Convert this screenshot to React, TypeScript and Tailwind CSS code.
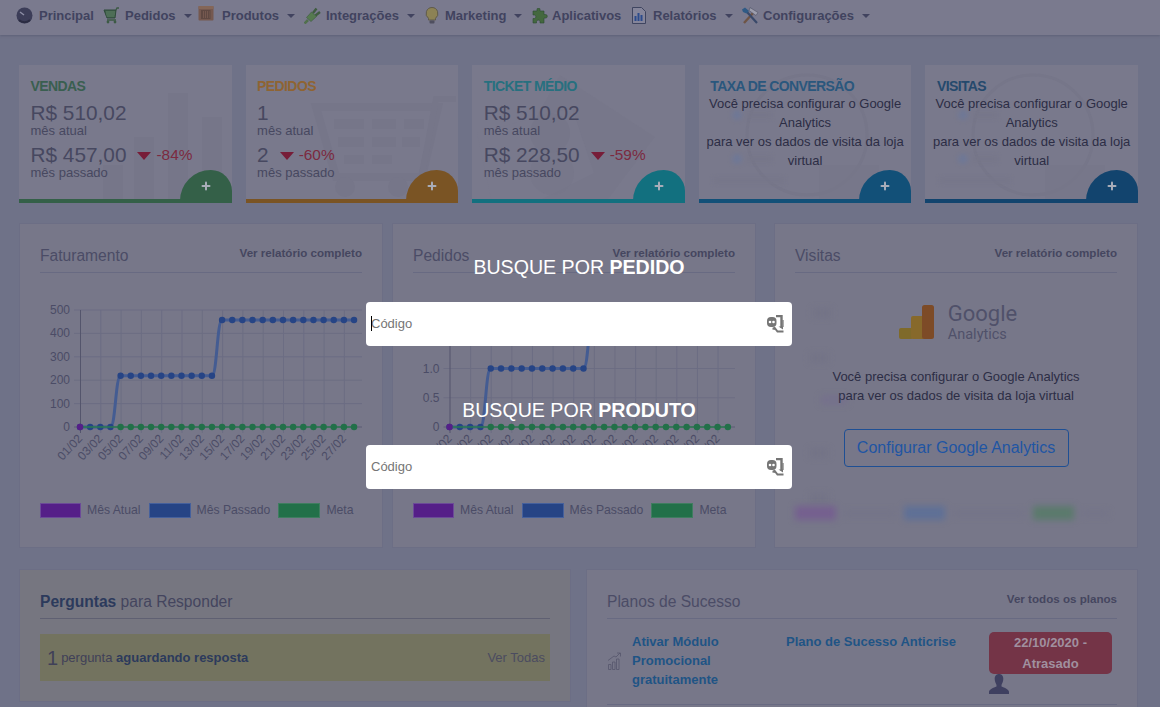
import type { ReactNode } from 'react';
import { Plus } from 'lucide-react';

const font = { fontFamily: '"Liberation Sans", Arial, sans-serif' };

function GlobeIcon() {
    return (
        <svg width="17" height="17" viewBox="0 0 17 17">
            <circle cx="8.500" cy="8.500" r="8" fill="#3c3d58" />
            <path d="M4 5l4 3" stroke="#8d8ea6" strokeWidth="1.400" />
            <path d="M3 13a8 8 0 0 0 11 0" stroke="#2b2c42" strokeWidth="2" fill="none" />
        </svg>
    );
}

function CartIcon() {
    return (
        <svg width="17" height="17" viewBox="0 0 17 17">
            <path d="M1 3h12l-1 8H4z" fill="#3f5f4a" stroke="#2e4a3a" />
            <path d="M3 5h9M3 7h9M3.500 9h8" stroke="#66856c" strokeWidth="0.800" />
            <path d="M13 3l1-2h2M4 13h9" stroke="#3c5a44" strokeWidth="1.300" fill="none" />
            <circle cx="5" cy="15" r="1.400" fill="#3c5a44" />
            <circle cx="12" cy="15" r="1.400" fill="#3c5a44" />
        </svg>
    );
}

function BoxIcon() {
    return (
        <svg width="16" height="16" viewBox="0 0 16 16">
            <rect x="0.500" y="1" width="15" height="14.500" rx="1" fill="#75584f" />
            <rect x="0.500" y="1" width="15" height="3" fill="#846658" />
            <path d="M4.500 6v7M6.500 6v7M8.500 6v7M10.500 6v7" stroke="#5f4842" strokeWidth="1" />
            <rect x="3.500" y="5.500" width="8.500" height="8" fill="none" stroke="#5f4842" />
        </svg>
    );
}

function PlugIcon() {
    return (
        <svg width="17" height="17" viewBox="0 0 17 17">
            <path d="M.5 16.500l3.500-3.500" stroke="#51704d" strokeWidth="2.600" />
            <path d="M2.500 10.500l5-5.500 5 4.500-5.500 5z" fill="#567a50" stroke="#3d5a3f" strokeWidth="0.600" />
            <path d="M9 6l3.500-4.500M11.500 8.500L16 5" stroke="#3f5c40" strokeWidth="2.400" />
        </svg>
    );
}

function BulbIcon() {
    return (
        <svg width="14" height="17" viewBox="0 0 14 17">
            <path d="M7 .5a6 6 0 0 1 3.500 10.800V13h-7v-1.700A6 6 0 0 1 7 .5z" fill="#8c8255" stroke="#5f5a4a" />
            <rect x="4.500" y="13.500" width="5" height="3" rx="1" fill="#4f4f5f" />
        </svg>
    );
}

function PuzzleIcon() {
    return (
        <svg width="17" height="16" viewBox="0 0 17 16">
            <path d="M1 3h4V1.500a1.500 1.500 0 0 1 3 0V3h4v3.500h1.500a1.800 1.800 0 0 1 0 3.600H12V15H8v-1.500a1.800 1.800 0 0 0-3.500 0V15H1v-4.500h1.500a1.800 1.800 0 0 0 0-3.500H1z" fill="#44683f" stroke="#2e4a33" strokeWidth="0.600" />
        </svg>
    );
}

function ReportIcon() {
    return (
        <svg width="14" height="17" viewBox="0 0 14 17">
            <path d="M.5.5h9l4 4v12H.5z" fill="#85859a" stroke="#3f4560" />
            <path d="M3.500 14V9M6.500 14V6M9.500 14V8" stroke="#2b4a8c" strokeWidth="2" />
        </svg>
    );
}

function ToolsIcon() {
    return (
        <svg width="17" height="17" viewBox="0 0 17 17">
            <path d="M2 16L12 5" stroke="#6f5546" strokeWidth="2.400" />
            <path d="M8 .5l8 5-2 3-7-5z" fill="#9c9dac" stroke="#4f5064" strokeWidth="0.600" />
            <path d="M15 16L5 5" stroke="#39496a" strokeWidth="2.200" />
            <path d="M0 2.500L3 .5l4 3.500-2.500 2.500L1 5z" fill="#2f5a85" />
        </svg>
    );
}

function FaceSwapIcon() {
    return (
        <svg width="17" height="18" viewBox="0 0 17 18" className="shrink-0">
            <rect x="0" y="2" width="9.500" height="10" rx="4" fill="#757575" />
            <circle cx="3" cy="7" r="1.300" fill="#fff" />
            <circle cx="6.500" cy="7" r="1.300" fill="#fff" />
            <path d="M9 1h5.500v11.500" fill="none" stroke="#757575" strokeWidth="2.400" />
            <path d="M16 5v7" stroke="#757575" strokeWidth="1.200" />
            <path d="M5.500 13.500l3 .5M7 12l3.500 4.500h6" fill="none" stroke="#757575" strokeWidth="2" />
            <path d="M11.500 11.500h4.500v3z" fill="#757575" />
        </svg>
    );
}

function NavItem({ icon, label, gap, caret, width }: { icon: ReactNode; label: string; gap: string; caret?: boolean; width: string }) {
    return (
        <div className={`flex items-center ${width}`}>
            <span className={`flex justify-center ${gap}`}>{icon}</span>
            <span className="text-[13px] font-bold text-[#41435f]">{label}</span>
            {caret && <span className="ml-[8px] border-x-[4px] border-t-[4px] border-x-transparent border-t-[#41435f]" />}
        </div>
    );
}

function Navigation() {
    return (
        <nav className="flex h-[35px] shrink-0 items-center bg-[#7a7a8e] pb-[4px] pl-[16px] shadow-[0_1px_2px_#5f6278]">
            <NavItem icon={<GlobeIcon />} label="Principal" gap="mr-[6px]" width="w-[87px]" />
            <NavItem icon={<CartIcon />} label="Pedidos" gap="mr-[5px]" caret width="w-[95px]" />
            <NavItem icon={<span className="-mt-[5px] block"><BoxIcon /></span>} label="Produtos" gap="mr-[8px]" caret width="w-[106px]" />
            <NavItem icon={<PlugIcon />} label="Integrações" gap="mr-[5px]" caret width="w-[121px]" />
            <NavItem icon={<BulbIcon />} label="Marketing" gap="mr-[6px]" caret width="w-[107px]" />
            <NavItem icon={<PuzzleIcon />} label="Aplicativos" gap="mr-[3px]" width="w-[100px]" />
            <NavItem icon={<ReportIcon />} label="Relatórios" gap="mr-[7px]" caret width="w-[110px]" />
            <NavItem icon={<ToolsIcon />} label="Configurações" gap="mr-[4px]" caret width="w-[135px]" />
        </nav>
    );
}

function Watermark({ kind }: { kind: string }) {
    const c = '#767689';
    if (kind === 'bars') {
        return (
            <svg className="absolute inset-0" width="213" height="138" viewBox="0 0 213 138">
                <path d="M84 135V100h20v35zM115 135V72h20v63zM149 135V28h20v107zM183 135V52h20v83z" fill={c} />
            </svg>
        );
    }
    if (kind === 'cart') {
        return (
            <svg className="absolute inset-0" width="213" height="138" viewBox="0 0 213 138">
                <path d="M70 42h122l-16 70H90z" fill="none" stroke={c} strokeWidth="8" />
                <path d="M88 54h30v10H88zM126 54h24v10h-24zM158 54h20v10h-20zM92 72h26v10H92zM126 72h24v10h-24zM156 72h18v10h-18zM98 90h20v9H98zM126 90h20v9h-20z" fill={c} />
                <path d="M176 110l14-76h20" fill="none" stroke={c} strokeWidth="6" />
                <circle cx="99" cy="122" r="10" fill={c} />
                <circle cx="152" cy="122" r="10" fill={c} />
            </svg>
        );
    }
    if (kind === 'ticket') {
        return (
            <svg className="absolute inset-0" width="213" height="138" viewBox="0 0 213 138">
                <path d="M88 10l95 62-50 66H60l-10-60z" fill={c} opacity="0.600" />
                <path d="M5 68l95-25 22 65-60 30H20z" fill="#79798c" />
                <circle cx="78" cy="68" r="20" fill={c} />
                <circle cx="80" cy="108" r="22" fill={c} opacity="0.700" />
            </svg>
        );
    }
    return (
        <svg className="absolute inset-0" width="213" height="138" viewBox="0 0 213 138">
            <circle cx="108" cy="70" r="60" fill="none" stroke={c} strokeWidth="3" />
            <rect x="120" y="100" width="60" height="38" fill={c} opacity="0.600" />
            <g className="blur-[2px]">
                <circle cx="38" cy="50" r="5" fill="#6f7896" />
                <rect x="48" y="47" width="24" height="6" fill={c} />
                <circle cx="38" cy="94" r="5" fill="#6f7896" />
                <rect x="48" y="91" width="24" height="6" fill={c} />
                <rect x="15" y="113" width="70" height="5" fill={c} />
            </g>
        </svg>
    );
}

function MetricCard({ title, titleClass, barClass, kind, rows, message }: {
    title: string;
    titleClass: string;
    barClass: string;
    kind: string;
    rows?: { now: string; before: string; delta: string };
    message?: boolean;
}) {
    return (
        <div className="relative h-[138px] overflow-hidden bg-[#79798c]">
            <Watermark kind={kind} />
            <div className="relative px-[11.500px] pt-[12px]">
                <h3 className={`text-sm leading-[18px] font-bold tracking-[-0.600px] ${titleClass}`}>{title}</h3>
                {rows && (
                    <div className="text-[#474860]">
                        <div className="mt-[6px] text-[20.800px] leading-[24px]">{rows.now}</div>
                        <div className="-mt-[2px] text-[13px] leading-[15px]">mês atual</div>
                        <div className="mt-[4px] flex items-center text-[20.800px] leading-[26px]">
                            <span>{rows.before}</span>
                            <span className="mt-[1px] ml-[11px] border-x-[7.500px] border-t-[8px] border-x-transparent border-t-[#771d38]" />
                            <span className="ml-[5px] text-[15.400px] text-[#7c2a40]">{rows.delta}</span>
                        </div>
                        <div className="-mt-[3px] text-[13px] leading-[15px]">mês passado</div>
                    </div>
                )}
                {message && (
                    <p className="-mx-[6px] -mt-[1px] text-center text-[13px] leading-[19px] text-[#2c2d45]">
                        Você precisa configurar o Google Analytics<br />para ver os dados de visita da loja virtual
                    </p>
                )}
            </div>
            <div className={`absolute inset-x-0 bottom-0 h-[4px] ${barClass}`} />
            <div className={`absolute right-0 bottom-0 flex h-[33px] w-[52px] items-center justify-center rounded-tl-[32px] rounded-tr-[22px] pb-[1px] ${barClass}`}>
                <Plus size={12} strokeWidth={4} className="text-[#a9adb9]" />
            </div>
        </div>
    );
}

const tickXs = [0, 2, 4, 6, 8, 10, 12, 14, 16, 18, 20, 22, 24, 26];

function LineChart({ x0, step, yTicks, yMax, values }: { x0: number; step: number; yTicks: { label: string; value: number }[]; yMax: number; values: number[] }) {
    const yOf = (v: number) => 137 - (117 * v) / yMax;
    const xOf = (i: number) => x0 + i * step;

    let line = `M${xOf(0)} ${yOf(values[0])}`;
    for (let i = 1; i < values.length; i++) {
        const mid = (xOf(i - 1) + xOf(i)) / 2;
        line += ` C${mid} ${yOf(values[i - 1])} ${mid} ${yOf(values[i])} ${xOf(i)} ${yOf(values[i])}`;
    }

    return (
        <svg width="322" height="190" viewBox="0 0 322 190" className="mt-[17px] overflow-visible" style={font}>
            {yTicks.map((t) => (
                <g key={t.label}>
                    <line x1={x0 - 6} x2="322" y1={yOf(t.value)} y2={yOf(t.value)} stroke={t.value === 0 ? '#5c5d74' : '#6c6d83'} />
                    <text x={x0 - 10} y={yOf(t.value) + 4} textAnchor="end" fontSize="12" fill="#4b4c66">{t.label}</text>
                </g>
            ))}
            {tickXs.map((i) => (
                <g key={i}>
                    <line x1={xOf(i) + 0.500} x2={xOf(i) + 0.500} y1="20" y2="143" stroke={i === 0 ? '#54556c' : '#6c6d83'} />
                    <text
                        x={xOf(i) + 3}
                        y="149"
                        fontSize="12"
                        fill="#4b4c66"
                        textAnchor="end"
                        transform={`rotate(-47 ${xOf(i) + 3} 149)`}
                    >
                        {`${String(i + 1).padStart(2, '0')}/02`}
                    </text>
                </g>
            ))}
            <path d={line} fill="none" stroke="#445c92" strokeWidth="3" />
            {values.map((v, i) => (
                <circle key={i} cx={xOf(i)} cy={yOf(v)} r="3.200" fill="#264485" />
            ))}
            <line x1={x0} x2={xOf(27)} y1="137" y2="137" stroke="#2a7a50" strokeWidth="1.500" />
            {values.map((_, i) => (i > 3 ? <circle key={i} cx={xOf(i)} cy="137" r="3.200" fill="#227049" /> : null))}
            <circle cx={xOf(0)} cy="137" r="3.200" fill="#551f88" />
        </svg>
    );
}

function Legend() {
    const items = [
        { label: 'Mês Atual', box: 'bg-[#551f88] border-[#6c4a98]', w: 'w-[41px]' },
        { label: 'Mês Passado', box: 'bg-[#264485] border-[#45609c]', w: 'w-[42px]' },
        { label: 'Meta', box: 'bg-[#227049] border-[#3f7d60]', w: 'w-[42px]' },
    ];
    return (
        <div className="mt-[23px] flex gap-[8px]">
            {items.map((item) => (
                <div key={item.label} className="flex items-center gap-[6px] text-[12.200px] leading-[15px] text-[#4b4c66]">
                    <span className={`block h-[15px] border ${item.w} ${item.box}`} />
                    {item.label}
                </div>
            ))}
        </div>
    );
}

function Panel({ title, link, children, className }: { title: ReactNode; link?: string; children: ReactNode; className: string }) {
    return (
        <section className={`border border-[#6c6e85] bg-[#777789] px-[20px] pt-[21px] ${className}`}>
            <header className="flex h-[28px] items-start justify-between border-b border-[#686a82]">
                <h2 className="text-[15.600px] leading-[22px] text-[#4b4c66]">{title}</h2>
                {link && <a className="-mt-[1px] text-[11.600px] leading-[18px] font-bold text-[#45465f]">{link}</a>}
            </header>
            {children}
        </section>
    );
}

function GoogleLogo() {
    return (
        <svg width="35" height="34" viewBox="0 0 35 34">
            <rect x="0" y="23" width="14" height="11" rx="2" fill="#7f6a2a" />
            <rect x="12" y="11" width="14" height="23" rx="2" fill="#87692b" />
            <rect x="23" y="0" width="12" height="34" rx="2.500" fill="#7d4b27" />
        </svg>
    );
}

function VisitsPanel() {
    return (
        <Panel title="Visitas" link="Ver relatório completo" className="relative h-[325px] w-[364px]">
            <div className="pointer-events-none absolute inset-0 blur-[3px]">
                <span className="absolute top-[85px] left-[38px] h-[8px] w-[18px] bg-[#737386]" />
                <span className="absolute top-[130px] left-[35px] h-[8px] w-[18px] bg-[#737386]" />
                <span className="absolute top-[172px] left-[46px] h-[8px] w-[26px] bg-[#75708c]" />
                <span className="absolute top-[225px] left-[35px] h-[8px] w-[18px] bg-[#737386]" />
                <span className="absolute top-[270px] left-[35px] h-[8px] w-[18px] bg-[#737386]" />
            </div>
            <div className="relative flex flex-col items-center">
                <div className="mt-[27px] flex items-center gap-[14px] pl-[4px]">
                    <GoogleLogo />
                    <div className="mt-[1px] flex flex-col text-[#50516a]" style={{ fontFamily: 'Roboto, sans-serif' }}>
                        <span className="text-[22px] leading-[25px]">Google</span>
                        <span className="text-[14.500px] leading-[18px]">Analytics</span>
                    </div>
                </div>
                <p className="mt-[23px] text-center text-[13px] leading-[19px] text-[#2c2d45]">
                    Você precisa configurar o Google Analytics<br />para ver os dados de visita da loja virtual
                </p>
                <button className="mt-[24px] h-[38px] w-[225px] rounded border border-[#1e4f94] text-base text-[#1f55a3]">
                    Configurar Google Analytics
                </button>
                <div className="mt-[39px] flex w-full gap-[9px] blur-[3px]">
                    <div className="flex items-center gap-[8px]">
                        <span className="h-[14px] w-[41px] bg-[#75608f]" />
                        <span className="h-[5px] w-[51px] bg-[#737388]" />
                    </div>
                    <div className="flex items-center gap-[8px]">
                        <span className="h-[14px] w-[41px] bg-[#5f7096]" />
                        <span className="h-[5px] w-[71px] bg-[#737388]" />
                    </div>
                    <div className="flex items-center gap-[8px]">
                        <span className="h-[14px] w-[41px] bg-[#5b7a6c]" />
                        <span className="h-[5px] w-[26px] bg-[#737388]" />
                    </div>
                </div>
            </div>
        </Panel>
    );
}

function GrowthIcon() {
    return (
        <svg width="15" height="18" viewBox="0 0 15 18" fill="none" stroke="#55566c" strokeWidth="0.800">
            <path d="M1.500 12.500h2.500v5H1.500zM5.500 10h2.500v7.500H5.500zM9.500 7h2.500v10.500H9.500z" />
            <path d="M1 8.500L7 4l2 1 4-4M10 1h3.500v3.500" />
        </svg>
    );
}

function PersonIcon() {
    return (
        <svg width="20" height="20" viewBox="0 0 20 20">
            <path d="M10 0c3 0 4.300 2.300 4.300 5S13 9.500 12.500 11v1.500c3 1 7.500 3 7.500 5.500v2H0v-2c0-2.500 4.500-4.500 7.500-5.500V11C7 9.500 5.700 7.700 5.700 5S7 0 10 0z" fill="#3f4060" />
        </svg>
    );
}

function SearchBox({ caret }: { caret?: boolean }) {
    return (
        <div className="relative flex h-[44px] w-[426px] items-center rounded-[4px] bg-white pr-[8px] pl-[5px]">
            <input
                readOnly
                placeholder="Código"
                className="min-w-0 flex-1 bg-transparent text-[13px] outline-none placeholder:text-[#757575]"
            />
            {caret && <span className="absolute top-[14px] left-[5px] h-[15px] w-px bg-black" />}
            <FaceSwapIcon />
        </div>
    );
}

const fat = Array.from({ length: 28 }, (_, i) => (i < 4 ? 0 : i < 14 ? 219 : 457));
const ped = Array.from({ length: 28 }, (_, i) => (i < 4 ? 0 : i < 14 ? 1 : 2));

export default function App() {
    return (
        <div className="relative h-[707px] w-[1160px] overflow-hidden bg-[#6f7288]" style={font}>
            <Navigation />

            <main className="flex flex-col pt-[30px] pl-[19px]">
                <div className="grid w-[1119px] grid-cols-5 gap-[14px]">
                    <MetricCard title="VENDAS" titleClass="text-[#3a5f50]" barClass="bg-[#346048]" kind="bars" rows={{ now: 'R$ 510,02', before: 'R$ 457,00', delta: '-84%' }} />
                    <MetricCard title="PEDIDOS" titleClass="text-[#8f6432]" barClass="bg-[#7a5424]" kind="cart" rows={{ now: '1', before: '2', delta: '-60%' }} />
                    <MetricCard title="TICKET MÉDIO" titleClass="text-[#27707f]" barClass="bg-[#12707f]" kind="ticket" rows={{ now: 'R$ 510,02', before: 'R$ 228,50', delta: '-59%' }} />
                    <MetricCard title="TAXA DE CONVERSÃO" titleClass="text-[#2a577d]" barClass="bg-[#125078]" kind="circle" message />
                    <MetricCard title="VISITAS" titleClass="text-[#25496c]" barClass="bg-[#12446e]" kind="visits" message />
                </div>

                <div className="mt-[20px] flex">
                    <Panel title="Faturamento" link="Ver relatório completo" className="h-[325px] w-[364px]">
                        <LineChart
                            x0={40}
                            step={10.150}
                            yMax={500}
                            yTicks={[
                                { label: '500', value: 500 },
                                { label: '400', value: 400 },
                                { label: '300', value: 300 },
                                { label: '200', value: 200 },
                                { label: '100', value: 100 },
                                { label: '0', value: 0 },
                            ]}
                            values={fat}
                        />
                        <Legend />
                    </Panel>
                    <Panel title="Pedidos" link="Ver relatório completo" className="ml-[9px] h-[325px] w-[364px]">
                        <LineChart
                            x0={36.500}
                            step={10.310}
                            yMax={2}
                            yTicks={[
                                { label: '2.0', value: 2 },
                                { label: '1.5', value: 1.5 },
                                { label: '1.0', value: 1 },
                                { label: '0.5', value: 0.5 },
                                { label: '0', value: 0 },
                            ]}
                            values={ped}
                        />
                        <Legend />
                    </Panel>
                    <div className="ml-[18px]">
                        <VisitsPanel />
                    </div>
                </div>

                <div className="mt-[21px] flex gap-[15px]">
                    <section className="h-[133px] w-[552px] border border-[#6c6e85] bg-[#767680] px-[20px] pt-[21px]">
                        <header className="h-[28px] border-b border-[#5f6072]">
                            <h2 className="text-[15.600px] leading-[22px] text-[#44455e]">
                                <b className="text-[#2c3a5c]">Perguntas</b> para Responder
                            </h2>
                        </header>
                        <div className="mt-[15px] flex h-[47px] items-center justify-between bg-[#73735f] pr-[5px] pl-[7px] text-[13px] text-[#3f4058]">
                            <span className="flex items-center gap-[3px]">
                                <span className="text-[20px] leading-none text-[#3f4058]">1</span>
                                <span>pergunta <b className="text-[#2c3a5c]">aguardando resposta</b></span>
                            </span>
                            <a className="text-[#4b4c60]">Ver Todas</a>
                        </div>
                    </section>

                    <Panel title="Planos de Sucesso" link="Ver todos os planos" className="h-[180px] w-[552px]">
                        <div className="flex h-[86px] items-start border-b border-[#686a82] pt-[13px]">
                            <div className="mt-[20px] w-[25px] shrink-0"><GrowthIcon /></div>
                            <a className="w-[154px] shrink-0 text-[13px] leading-[19px] font-bold text-[#1f5485]">
                                Ativar Módulo<br />Promocional<br />gratuitamente
                            </a>
                            <a className="w-[203px] shrink-0 text-[13px] leading-[19px] font-bold text-[#1f5485]">
                                Plano de Sucesso Anticrise
                            </a>
                            <div>
                                <div className="h-[42px] w-[123px] rounded-[5px] bg-[#743447] text-center text-[13px] leading-[21px] font-bold text-[#a0909f]">
                                    22/10/2020 -<br />Atrasado
                                </div>
                                <PersonIcon />
                            </div>
                        </div>
                    </Panel>
                </div>
            </main>

            <div className="absolute inset-0 flex flex-col items-center pt-[253px] pr-[2px] text-center text-white">
                <h1 className="text-[19.600px] leading-[28px]">BUSQUE POR <b>PEDIDO</b></h1>
                <div className="mt-[21px]"><SearchBox caret /></div>
                <h1 className="mt-[50px] text-[19.600px] leading-[28px]">BUSQUE POR <b>PRODUTO</b></h1>
                <div className="mt-[21px]"><SearchBox /></div>
            </div>
        </div>
    );
}
